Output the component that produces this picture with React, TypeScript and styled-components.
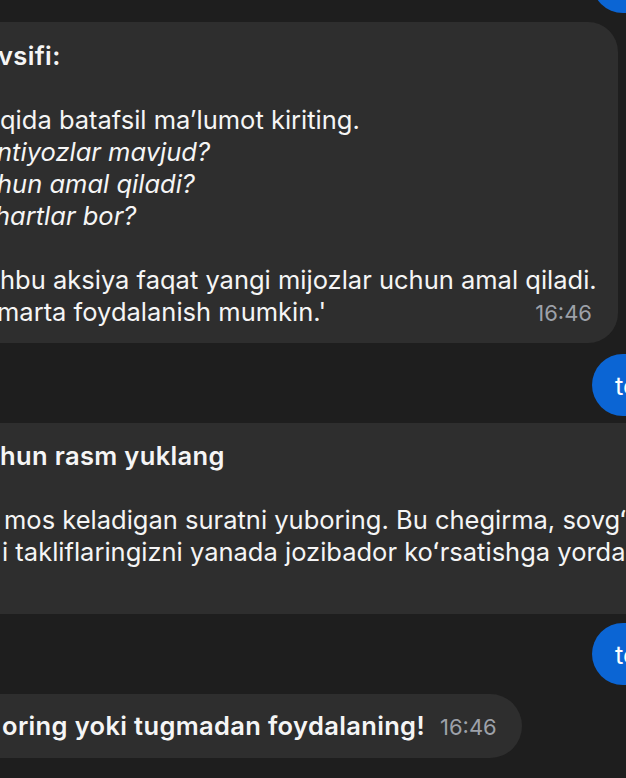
import React from "react";
import styled, { createGlobalStyle } from "styled-components";

const Global = createGlobalStyle`
  html, body {
    margin: 0;
    padding: 0;
    background: #1e1e1e;
    overflow: hidden;
  }
  body {
    font-family: Inter, "Noto Sans", "Liberation Sans", sans-serif;
    -webkit-font-smoothing: antialiased;
  }
`;

const Chat = styled.div`
  display: flex;
  flex-direction: column;
  width: 626px;
  height: 778px;
  overflow: hidden;
`;

const OutRow = styled.div<{ $mt: number }>`
  display: flex;
  margin-top: ${(p) => p.$mt}px;
  padding-left: 592px;
`;

const OutBubble = styled.div`
  flex-shrink: 0;
  display: flex;
  align-items: center;
  height: 62px;
  padding: 0 22px 0 23px;
  border-radius: 31px;
  background: #0b65d4;
  color: #ffffff;
  font-size: 25.5px;
  white-space: nowrap;
`;

const InRow = styled.div<{ $mt: number }>`
  display: flex;
  margin-top: ${(p) => p.$mt}px;
`;

const InBubble = styled.div<{ $right: number; $radius: number; $pt: number; $pb: number }>`
  flex-shrink: 0;
  box-sizing: border-box;
  width: ${(p) => p.$right + 40}px;
  margin-left: -40px;
  padding: ${(p) => p.$pt}px 26px ${(p) => p.$pb}px 40px;
  border-radius: ${(p) => p.$radius}px;
  background: #2e2e2e;
  color: #f5f5f5;
  font-size: 25.5px;
  line-height: 32px;
  white-space: nowrap;
`;

const Line = styled.div<{ $shift?: number; $italic?: boolean; $bold?: boolean }>`
  margin-left: ${(p) => p.$shift ?? 0}px;
  font-style: ${(p) => (p.$italic ? "italic" : "normal")};
  font-weight: ${(p) => (p.$bold ? 600 : 400)};
  letter-spacing: ${(p) => (p.$bold ? "0.35px" : "0")};
`;

const Block = styled.div`
  margin-top: 32px;
`;

const LastRow = styled.div<{ $gap?: number }>`
  display: flex;
  align-items: baseline;
  justify-content: space-between;
  gap: ${(p) => p.$gap ?? 16}px;
`;

const Time = styled.span`
  font-size: 22px;
  color: #9da1a9;
  font-weight: 400;
  font-style: normal;
  flex-shrink: 0;
`;

export default function App() {
  return (
    <>
      <Global />
      <Chat>
        <OutRow $mt={-49}>
          <OutBubble>test</OutBubble>
        </OutRow>

        <InRow $mt={9}>
          <InBubble $right={618} $radius={30} $pt={18} $pb={14}>
            <Line $bold $shift={-2}>vsifi:</Line>
            <Block>
              <Line>qida batafsil maʼlumot kiriting.</Line>
              <Line $italic $shift={-3}>ntiyozlar mavjud?</Line>
              <Line $italic $shift={-3}>hun amal qiladi?</Line>
              <Line $italic $shift={-5}>hartlar bor?</Line>
            </Block>
            <Block>
              <Line>hbu aksiya faqat yangi mijozlar uchun amal qiladi.</Line>
              <LastRow>
                <Line $shift={-3}>marta foydalanish mumkin.'</Line>
                <Time>16:46</Time>
              </LastRow>
            </Block>
          </InBubble>
        </InRow>

        <OutRow $mt={11}>
          <OutBubble>test</OutBubble>
        </OutRow>

        <InRow $mt={7}>
          <InBubble $right={1100} $radius={30} $pt={17} $pb={14}>
            <Line $bold>hun rasm yuklang</Line>
            <Block>
              <Line $shift={4}>mos keladigan suratni yuboring. Bu chegirma, sovgʻa yoki</Line>
              <Line $shift={2}>i takliflaringizni yanada jozibador koʻrsatishga yordam beradi.</Line>
            </Block>
            <LastRow>
              <span />
              <Time>16:46</Time>
            </LastRow>
          </InBubble>
        </InRow>

        <OutRow $mt={9}>
          <OutBubble>test</OutBubble>
        </OutRow>

        <InRow $mt={9}>
          <InBubble $right={522} $radius={32} $pt={16} $pb={15}>
            <LastRow $gap={15}>
              <Line $bold $shift={2}>oring yoki tugmadan foydalaning!</Line>
              <Time>16:46</Time>
            </LastRow>
          </InBubble>
        </InRow>
      </Chat>
    </>
  );
}
